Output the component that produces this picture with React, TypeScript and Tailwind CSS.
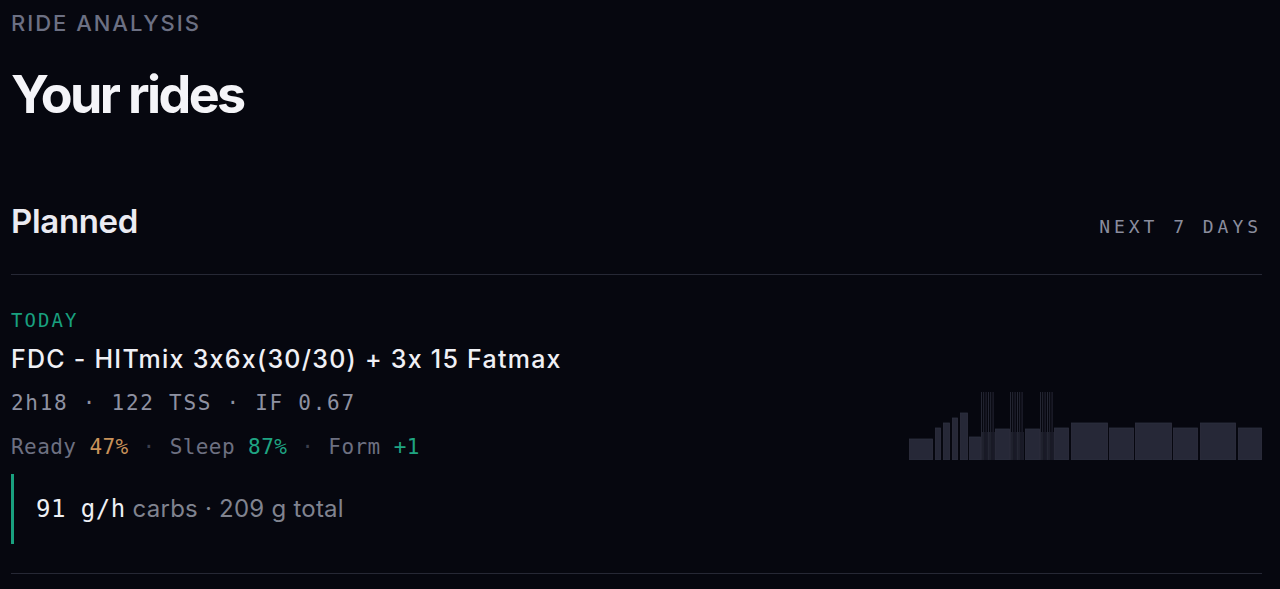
import React from "react";

// workout profile, page px: [x0, x1, top] with bottom at 70 (svg space)
const blocks: [number, number, number][] = [
  [909, 933, 439],
  [935, 941, 428],
  [943, 950, 423],
  [952, 958, 418],
  [960, 968, 413],
  [969, 981, 437],
  [995, 1010, 429],
  [1025, 1040, 429],
  [1054, 1069, 428],
  [1071, 1108, 423],
  [1109, 1134, 428],
  [1135, 1172, 423],
  [1173, 1198, 428],
  [1200, 1236, 423],
  [1238, 1262, 428],
];

// 6 x (30/30) sets
const sets: number[] = [981, 1010, 1040];

const X0 = 909;
const Y0 = 390;

const WorkoutChart: React.FC = () => {
  const bars: React.ReactNode[] = [];
  blocks.forEach(([a, b, top], i) => {
    bars.push(
      <rect
        key={"b" + i}
        x={a - X0 + 0.5}
        y={top - Y0}
        width={b - a - 1}
        height={460 - top}
        fill="#262837"
        stroke="#2e3040"
        strokeWidth={0.8}
      />
    );
  });
  sets.forEach((s, i) => {
    const w = 14 / 12;
    for (let k = 0; k < 12; k++) {
      const top = k % 2 === 0 ? 392 : 432;
      bars.push(
        <rect
          key={"s" + i + "-" + k}
          x={s - X0 + k * w}
          y={top - Y0}
          width={w - 0.35}
          height={460 - top}
          fill={k % 2 === 0 ? "#2d2f3e" : "#262837"}
        />
      );
    }
  });
  return (
    <svg width={353} height={70} viewBox="0 0 353 70" className="block">
      {bars}
    </svg>
  );
};

const Dot = () => <span className="mx-[14px] text-[#3b3e4d]">·</span>;

export default function App() {
  return (
    <div className="min-h-[589px] w-full bg-[#06070f] pl-[11px] pr-[18px] pt-[9px] font-['Inter',sans-serif] [font-feature-settings:'calt'_0]">
      <div className="text-[22px] font-medium uppercase leading-[28px] tracking-[0.09em] text-[#6c7083]">
        Ride analysis
      </div>
      <h1 className="mt-[30px] text-[52px] font-bold leading-[56px] tracking-[-0.05em] text-[#f4f4f8]">
        Your rides
      </h1>

      <div className="mt-[78px] flex items-baseline justify-between border-b border-[#262835] pb-[33px]">
        <h2 className="text-[33px] font-semibold leading-[40px] tracking-[-0.01em] text-[#ebebf2]">
          Planned
        </h2>
        <span className="font-['DejaVu_Sans_Mono',monospace] text-[18px] uppercase leading-[24px] tracking-[0.22em] text-[#8a8d9e]">
          Next 7 days
        </span>
      </div>

      <div className="border-b border-[#262835] pb-[29px] pt-[33px]">
        <div className="flex items-end justify-between">
          <div>
            <div className="font-['DejaVu_Sans_Mono',monospace] text-[19px] uppercase leading-[24px] tracking-[0.11em] text-[#19a07f]">
              Today
            </div>
            <div className="mt-[11px] text-[25px] font-medium leading-[32px] tracking-[0.05em] text-[#f0f0f5]">
              FDC - HITmix 3x6x(30/30) + 3x 15 Fatmax
            </div>
            <div className="mt-[14px] font-['DejaVu_Sans_Mono',monospace] text-[21px] leading-[28px] tracking-[0.082em] text-[#8e91a1]">
              2h18 · 122 TSS · IF 0.67
            </div>
            <div className="mt-[16px] font-['DejaVu_Sans_Mono',monospace] text-[21px] leading-[28px] tracking-[0.02em] text-[#6d7081]">
              Ready <span className="text-[#c9925a]">47%</span>
              <Dot />
              Sleep <span className="text-[#1fa482]">87%</span>
              <Dot />
              Form <span className="text-[#1fa482]">+1</span>
            </div>
          </div>
          <div className="mb-[1px]">
            <WorkoutChart />
          </div>
        </div>

        <div className="mt-[13px] border-l-[3px] border-[#19a07f] py-[19px] pl-[22px]">
          <div className="text-[24px] leading-[32px] tracking-[0.01em] text-[#80838f]">
            <span className="font-['DejaVu_Sans_Mono',monospace] text-[24px] tracking-[0.02em] text-[#eef0f5]">
              91 g/h
            </span>{" "}
            carbs · 209 g total
          </div>
        </div>
      </div>
    </div>
  );
}
